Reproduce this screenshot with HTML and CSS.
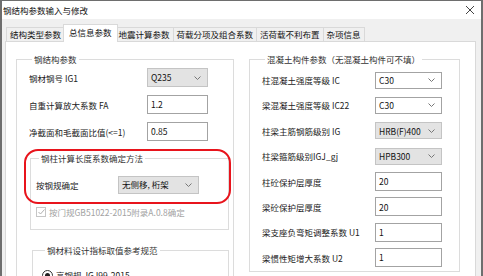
FILE: index.html
```html
<!DOCTYPE html>
<html lang="zh-CN">
<head>
  <meta charset="UTF-8" />
  <title>钢结构参数输入与修改</title>
  <link rel="stylesheet" href="styles.css">
</head>
<body>

  <div class="window">

    <!-- Title bar -->
    <div class="title-bar">
      <span class="title">钢结构参数输入与修改</span>
      <svg class="close" width="10" height="10" viewBox="0 0 10 10">
        <path d="M1 1L9 9M9 1L1 9" stroke="#444" stroke-width="1" fill="none"/>
      </svg>
    </div>

    <div class="dialog">

      <!-- Tabs -->
      <div class="tabs">
        <div class="tab first">结构类型参数</div>
        <div class="tab active">总信息参数</div>
        <div class="tab">地震计算参数</div>
        <div class="tab">荷载分项及组合系数</div>
        <div class="tab">活荷载不利布置</div>
        <div class="tab">杂项信息</div>
      </div>

      <div class="tab-page">

        <!-- Left column -->
        <div class="column left">
          <fieldset class="group outer">
            <legend>钢结构参数</legend>

            <div class="row">
              <span class="label">钢材钢号 IG1</span>
              <div class="combo locked">Q235<svg class="chev" width="7" height="4" viewBox="0 0 7 4"><path d="M0.5 0.5L3.5 3.5L6.5 0.5" stroke="#777" fill="none"/></svg></div>
            </div>
            <div class="row">
              <span class="label">自重计算放大系数 FA</span>
              <div class="input">1.2</div>
            </div>
            <div class="row">
              <span class="label">净截面和毛截面比值(&lt;=1)</span>
              <div class="input">0.85</div>
            </div>

            <fieldset class="group inner">
              <legend>钢柱计算长度系数确定方法</legend>
              <div class="row">
                <span class="label short">按钢规确定</span>
                <div class="combo locked wide">无侧移, 桁架<svg class="chev" width="7" height="4" viewBox="0 0 7 4"><path d="M0.5 0.5L3.5 3.5L6.5 0.5" stroke="#777" fill="none"/></svg></div>
              </div>
              <div class="check-row">
                <span class="checkbox">
                  <svg width="7" height="6" viewBox="0 0 7 6"><path d="M0.5 3L2.5 5L6.5 0.5" stroke="#b0b0b0" fill="none"/></svg>
                </span>
                <span class="disabled">按门规GB51022-2015附录A.0.8确定</span>
              </div>
            </fieldset>

            <fieldset class="group inner second">
              <legend>钢材料设计指标取值参考规范</legend>
              <div class="check-row">
                <span class="radio"><span class="dot"></span></span>
                <span>高钢规 JGJ99-2015</span>
              </div>
            </fieldset>
          </fieldset>

          <div class="mark"></div>
        </div>

        <!-- Right column -->
        <div class="column right">
          <fieldset class="group concrete">
            <legend>混凝土构件参数（无混凝土构件可不填）</legend>

            <div class="row">
              <span class="label">柱混凝土强度等级 IC</span>
              <div class="combo">C30<svg class="chev" width="7" height="4" viewBox="0 0 7 4"><path d="M0.5 0.5L3.5 3.5L6.5 0.5" stroke="#777" fill="none"/></svg></div>
            </div>
            <div class="row">
              <span class="label">梁混凝土强度等级 IC22</span>
              <div class="combo">C30<svg class="chev" width="7" height="4" viewBox="0 0 7 4"><path d="M0.5 0.5L3.5 3.5L6.5 0.5" stroke="#777" fill="none"/></svg></div>
            </div>
            <div class="row">
              <span class="label">柱梁主筋钢筋级别 IG</span>
              <div class="combo locked">HRB(F)400<svg class="chev" width="7" height="4" viewBox="0 0 7 4"><path d="M0.5 0.5L3.5 3.5L6.5 0.5" stroke="#777" fill="none"/></svg></div>
            </div>
            <div class="row">
              <span class="label">柱梁箍筋级别IGJ_gj</span>
              <div class="combo locked">HPB300<svg class="chev" width="7" height="4" viewBox="0 0 7 4"><path d="M0.5 0.5L3.5 3.5L6.5 0.5" stroke="#777" fill="none"/></svg></div>
            </div>
            <div class="row">
              <span class="label">柱砼保护层厚度</span>
              <div class="input">20</div>
            </div>
            <div class="row">
              <span class="label">梁砼保护层厚度</span>
              <div class="input">20</div>
            </div>
            <div class="row">
              <span class="label">梁支座负弯矩调整系数 U1</span>
              <div class="input">1</div>
            </div>
            <div class="row">
              <span class="label">梁惯性矩增大系数 U2</span>
              <div class="input">1</div>
            </div>
          </fieldset>
        </div>

      </div>
    </div>
  </div>

</body>
</html>
```

FILE: styles.css
```css
body {
  margin: 0;
  padding: 0;
  font-family: "Noto Sans CJK SC", "Noto Sans", sans-serif;
  font-size: 8.5px;
  color: #222;
}

/* Window frame */
.window {
  width: 483px;
  height: 276px;
  box-sizing: border-box;
  border: 2px solid #6e6e6e;
  border-top-width: 1px;
  border-bottom: none;
  background: #f0f0f0;
  display: flex;
  flex-direction: column;
  overflow: hidden;
}

.title-bar {
  height: 18px;
  flex: none;
  background: #fff;
  display: flex;
  align-items: center;
  justify-content: space-between;
  padding: 0 6px 0 1px;
}

.title {
  color: #111;
}

/* Dialog body */
.dialog {
  flex: 1;
  display: flex;
  flex-direction: column;
  padding: 6px 5px 0 3px;
}

.tabs {
  display: flex;
  align-items: flex-end;
  height: 16px;
  padding-left: 1px;
  position: relative;
  z-index: 1;
}

.tab {
  height: 13px;
  line-height: 13px;
  padding: 0 3px;
  border: 1px solid #d9d9d9;
  border-bottom: none;
  border-left: none;
  color: #111;
  white-space: nowrap;
}

.tab.first {
  border-left: 1px solid #d9d9d9;
}

.tab.active {
  height: 17px;
  line-height: 15px;
  margin: 0 -2px -1px;
  padding: 0 5px;
  background: #fff;
  border-left: 1px solid #d9d9d9;
  position: relative;
}

.tab-page {
  flex: 1;
  display: flex;
  gap: 15px;
  background: #fff;
  border: 1px solid #d9d9d9;
  border-bottom: none;
  padding: 11px 0 0 10px;
}

/* Group boxes */
.group {
  margin: 0;
  border: 1px solid #dcdcdc;
  min-width: 0;
}

.group legend {
  padding: 0 2px;
  margin-left: 3px;
  line-height: 12px;
  color: #333;
}

.column {
  position: relative;
}

.outer {
  width: 218px;
  box-sizing: border-box;
  padding: 2px 4px 0 12px;
  height: 240px;
}

.concrete {
  width: 211px;
  box-sizing: border-box;
  padding: 5px 6px 3px 12px;
}

.row {
  display: flex;
  align-items: center;
  height: 21px;
  margin-bottom: 6px;
}

.concrete .row {
  height: 20px;
  margin-bottom: 5.4px;
}

.concrete .row:last-of-type {
  margin-bottom: 0;
}

.label {
  width: 118px;
  flex: none;
  white-space: nowrap;
}

.concrete .label {
  width: 113px;
}

.label.short {
  width: 82px;
}

/* Controls */
.combo,
.input {
  box-sizing: border-box;
  width: 61px;
  height: 19px;
  border: 1px solid #a3a3a3;
  background: #fff;
  padding: 0 3px;
  display: flex;
  align-items: center;
  justify-content: space-between;
  line-height: 1;
  color: #111;
}

.concrete .combo,
.concrete .input {
  width: 67px;
}

.concrete .combo {
  height: 17px;
}

.combo.locked {
  background: #e3e3e3;
  border-color: #c4c4c4;
}

.combo.wide {
  width: 81px;
  height: 18px;
}

.chev {
  flex: none;
  margin-right: 3px;
}

/* Nested groups */
.inner {
  margin: 10px 0 0 1px;
  padding: 0 4px 10px 5px;
}

.inner .row {
  margin: 10px 0 0;
}

.inner.second {
  margin: 14px 0 0 3px;
  padding: 6px 4px 0 9px;
}

.check-row {
  display: flex;
  align-items: center;
  gap: 3px;
  height: 14px;
  margin-top: 10px;
  white-space: nowrap;
}

.inner.second .check-row {
  margin-top: 6px;
}

.checkbox {
  width: 8px;
  height: 8px;
  border: 1px solid #c6c6c6;
  display: flex;
  align-items: center;
  justify-content: center;
  flex: none;
}

.disabled {
  color: #a2a2a2;
}

.radio {
  width: 9px;
  height: 9px;
  border: 1px solid #333;
  border-radius: 50%;
  display: flex;
  align-items: center;
  justify-content: center;
  flex: none;
}

.radio .dot {
  width: 5px;
  height: 5px;
  border-radius: 50%;
  background: #222;
}

/* Red annotation */
.mark {
  position: absolute;
  left: 8px;
  top: 96px;
  width: 207px;
  height: 55px;
  box-sizing: border-box;
  border: 2px solid #e8141c;
  border-radius: 14px;
  pointer-events: none;
}
```
